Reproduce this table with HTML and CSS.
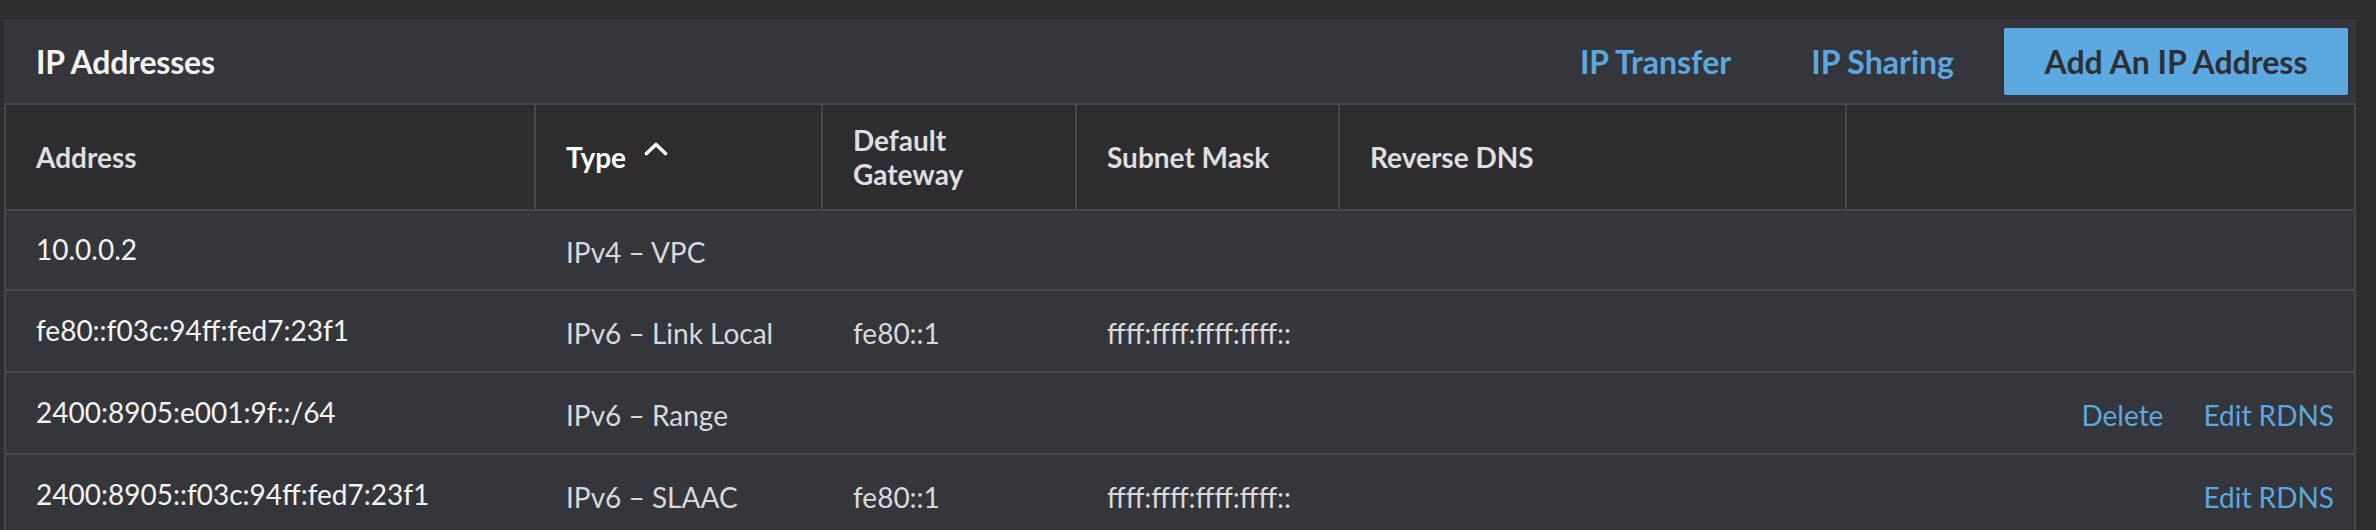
FILE: index.html
```html
<!DOCTYPE html>
<html>
<head>
<meta charset="utf-8">
<title>IP Addresses</title>
<link rel="stylesheet" href="styles.css">
</head>
<body>
<section class="panel">
  <header class="panel-header">
    <h2 class="title">IP Addresses</h2>
    <div class="actions">
      <button class="text-btn transfer">IP Transfer</button>
      <button class="text-btn sharing">IP Sharing</button>
      <button class="primary-btn">Add An IP Address</button>
    </div>
  </header>
  <table class="ip-table">
    <colgroup>
      <col class="c-address">
      <col class="c-type">
      <col class="c-gateway">
      <col class="c-mask">
      <col class="c-rdns">
      <col class="c-actions">
    </colgroup>
    <thead>
      <tr>
        <th>Address</th>
        <th class="sorted">Type<svg class="caret" width="24" height="14" viewBox="0 0 24 14"><path d="M2.5 11.5 L12 2.5 L21.5 11.5" fill="none" stroke="#ffffff" stroke-width="3.6" stroke-linecap="round" stroke-linejoin="round"/></svg></th>
        <th>Default Gateway</th>
        <th>Subnet Mask</th>
        <th>Reverse DNS</th>
        <th></th>
      </tr>
    </thead>
    <tbody>
      <tr class="first">
        <td class="addr">10.0.0.2</td>
        <td>IPv4 – VPC</td>
        <td></td>
        <td></td>
        <td></td>
        <td class="row-actions"></td>
      </tr>
      <tr>
        <td class="addr">fe80::f03c:94ff:fed7:23f1</td>
        <td>IPv6 – Link Local</td>
        <td>fe80::1</td>
        <td>ffff:ffff:ffff:ffff::</td>
        <td></td>
        <td class="row-actions"></td>
      </tr>
      <tr>
        <td class="addr">2400:8905:e001:9f::/64</td>
        <td>IPv6 – Range</td>
        <td></td>
        <td></td>
        <td></td>
        <td class="row-actions"><a class="link">Delete</a><a class="link">Edit RDNS</a></td>
      </tr>
      <tr>
        <td class="addr">2400:8905::f03c:94ff:fed7:23f1</td>
        <td>IPv6 – SLAAC</td>
        <td>fe80::1</td>
        <td>ffff:ffff:ffff:ffff::</td>
        <td></td>
        <td class="row-actions"><a class="link">Edit RDNS</a></td>
      </tr>
    </tbody>
  </table>
</section>
</body>
</html>
```
FILE: styles.css
```css
* { box-sizing: border-box; }

html, body {
  margin: 0;
  padding: 0;
  background: #2d2d2f;
  font-family: "Lato", "Liberation Sans", sans-serif;
}

.panel {
  margin: 19px 0 0 4px;
  width: 2352px;
  background: #35363b;
}

.panel-header {
  display: flex;
  align-items: center;
  justify-content: space-between;
  height: 84px;
  padding: 0 8px 0 32px;
}

.title {
  margin: 0;
  font-size: 32px;
  font-weight: 700;
  color: #f3f3f4;
  letter-spacing: -0.2px;
}

.actions {
  display: flex;
  align-items: center;
}

.text-btn {
  background: none;
  border: 0;
  padding: 0;
  font-family: inherit;
  font-size: 32px;
  font-weight: 700;
  color: #5ba7e0;
  cursor: pointer;
}

.transfer { margin-right: 80px; }
.sharing { margin-right: 50px; }

.primary-btn {
  width: 344px;
  height: 67px;
  border: 0;
  border-radius: 2px;
  background: #5ca8e0;
  color: #2f3035;
  font-family: inherit;
  font-size: 32px;
  font-weight: 700;
  cursor: pointer;
}

.ip-table {
  width: 2352px;
  border-collapse: separate;
  border-spacing: 0;
  table-layout: fixed;
  border: 2px solid #46474c;
  border-bottom: 0;
}

.c-address { width: 528px; }
.c-type { width: 287px; }
.c-gateway { width: 254px; }
.c-mask { width: 263px; }
.c-rdns { width: 507px; }
.c-actions { width: 509px; }

.ip-table th {
  height: 106px;
  background: #2d2d30;
  text-align: left;
  padding: 2px 30px 0 30px;
  font-size: 28px;
  font-weight: 700;
  line-height: 1.2;
  color: #dedee1;
  border-bottom: 2px solid #46474c;
  border-left: 2px solid #46474c;
  vertical-align: middle;
}

.ip-table th:first-child {
  border-left: 0;
}

.ip-table th.sorted {
  color: #ffffff;
}

.caret {
  margin-left: 18px;
  vertical-align: 12px;
}

.ip-table td {
  height: 82px;
  padding: 3px 30px 0 30px;
  font-size: 28px;
  font-weight: 400;
  color: #d9d9dc;
  border-bottom: 2px solid #46474c;
  vertical-align: middle;
  white-space: nowrap;
}

.ip-table tr.first td {
  height: 80px;
}

.ip-table td:nth-child(2),
.ip-table td:nth-child(3),
.ip-table td:nth-child(4) {
  padding-left: 32px;
}

.ip-table td.addr {
  padding: 0 30px 2px 30px;
  color: #f4f4f5;
}

.row-actions {
  text-align: right;
  padding-right: 20px !important;
}

.link {
  color: #5ba7e0;
  margin-left: 40px;
  cursor: pointer;
}
```
